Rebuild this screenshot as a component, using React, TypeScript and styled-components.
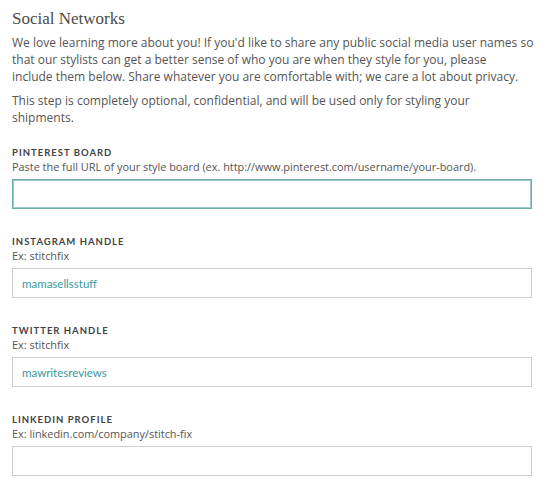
import styled, { createGlobalStyle } from 'styled-components';

const GlobalStyle = createGlobalStyle`
  body {
    margin: 0;
    background: #ffffff;
    font-family: 'Open Sans', 'Liberation Sans', sans-serif;
  }
`;

type Field = {
  label: string;
  hint: string;
  value?: string;
  focused?: boolean;
};

const fields: Field[] = [
  {
    label: 'Pinterest Board',
    hint: 'Paste the full URL of your style board (ex. http://www.pinterest.com/username/your-board).',
    focused: true,
  },
  { label: 'Instagram Handle', hint: 'Ex: stitchfix', value: 'mamasellsstuff' },
  { label: 'Twitter Handle', hint: 'Ex: stitchfix', value: 'mawritesreviews' },
  { label: 'LinkedIn Profile', hint: 'Ex: linkedin.com/company/stitch-fix' },
];

export default function App() {
  return (
    <>
      <GlobalStyle />
      <Page>
        <Title>Social Networks</Title>
        <Intro>
          We love learning more about you! If you'd like to share any public social media user names so
          <br />
          that our stylists can get a better sense of who you are when they style for you, please
          <br />
          include them below. Share whatever you are comfortable with; we care a lot about privacy.
        </Intro>
        <Intro>
          This step is completely optional, confidential, and will be used only for styling your
          <br />
          shipments.
        </Intro>
        <Fields>
          {fields.map((f) => (
            <FieldGroup key={f.label}>
              <Label>{f.label}</Label>
              <Hint>{f.hint}</Hint>
              <Input $focused={f.focused} defaultValue={f.value ?? ''} readOnly />
            </FieldGroup>
          ))}
        </Fields>
      </Page>
    </>
  );
}

const Page = styled.div`
  width: 520px;
  padding: 8px 0 0 12px;
  color: #555;
`;

const Title = styled.h2`
  margin: 0 0 4px;
  font-family: 'Liberation Serif', serif;
  font-weight: normal;
  font-size: 17px;
  line-height: 22px;
  color: #4a4a4a;
`;

const Intro = styled.p`
  margin: 0 0 7px;
  font-size: 12px;
  line-height: 17px;
  white-space: nowrap;
  color: #555;
`;

const Fields = styled.div`
  display: flex;
  flex-direction: column;
  gap: 26px;
  margin-top: 20px;
`;

const FieldGroup = styled.div`
  display: flex;
  flex-direction: column;
`;

const Label = styled.div`
  font-family: 'Lato', sans-serif;
  font-weight: bold;
  font-size: 9.5px;
  letter-spacing: 1px;
  text-transform: uppercase;
  line-height: 14px;
  color: #444;
`;

const Hint = styled.div`
  font-size: 10.9px;
  line-height: 14px;
  color: #555;
  margin-bottom: 5px;
`;

const Input = styled.input<{ $focused?: boolean }>`
  box-sizing: border-box;
  width: 520px;
  height: 30px;
  padding: 0 9px;
  border: 1px solid ${(p) => (p.$focused ? '#6aabab' : '#cfcfcf')};
  ${(p) => (p.$focused ? 'box-shadow: inset 0 0 0 1px #9fcaca;' : '')}
  background: #fff;
  font-family: 'Lato', sans-serif;
  font-size: 11.5px;
  color: #3a9a9a;
  outline: none;
`;
